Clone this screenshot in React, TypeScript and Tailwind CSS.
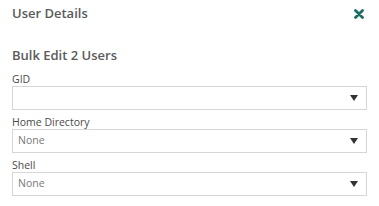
import { FC } from 'react';

const Caret: FC = () => (
  <svg width="8" height="6" viewBox="0 0 8 6" className="shrink-0">
    <path d="M0 0h8L4 6z" fill="#333" />
  </svg>
);

const SelectField: FC<{ label: string; value?: string }> = ({ label, value }) => (
  <div className="flex flex-col">
    <label className="text-[10.5px] leading-[13px] text-[#4a4a4a]">{label}</label>
    <div className="h-[24px] border border-[#d6d6d6] bg-white flex items-center justify-between pl-[5px] pr-[8px]">
      <span className="text-[10.5px] text-[#777]">{value ?? ''}</span>
      <Caret />
    </div>
  </div>
);

export default function App() {
  return (
    <div
      className="w-[379px] h-[206px] bg-white px-[12px] pt-[5px]"
      style={{ fontFamily: '"Open Sans", "Noto Sans", sans-serif' }}
    >
      <div className="flex items-center justify-between h-[18px]">
        <h2 className="text-[13px] text-[#5a5a5a] font-semibold">User Details</h2>
        <svg width="10" height="10" viewBox="0 0 10 10" className="mr-[3px]">
          <path d="M1.5 1.5l7 7M8.5 1.5l-7 7" stroke="#1f6b66" strokeWidth="2.8" strokeLinecap="round" />
        </svg>
      </div>
      <h3 className="mt-[23px] text-[13px] leading-[18px] text-[#5a5a5a] font-semibold">Bulk Edit 2 Users</h3>
      <div className="mt-[9px] flex flex-col gap-[6px]">
        <SelectField label="GID" />
        <SelectField label="Home Directory" value="None" />
        <SelectField label="Shell" value="None" />
      </div>
    </div>
  );
}
